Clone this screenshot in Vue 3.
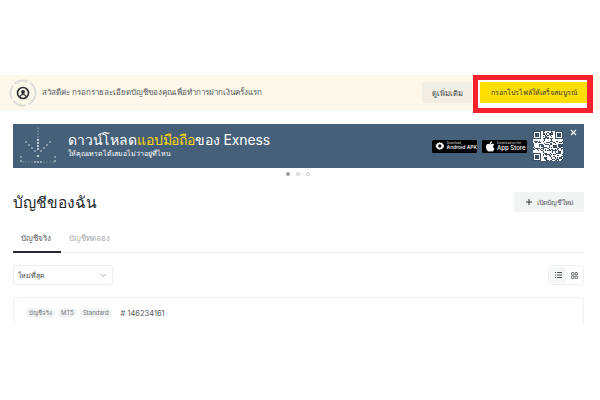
<template>
  <div class="page">
    <div class="notice">
      <div class="avatar">
        <svg width="28" height="28" viewBox="0 0 28 28" fill="none">
          <circle cx="14" cy="14" r="12.5" stroke="#dcdcd8" stroke-width="2" stroke-dasharray="14 2.5" />
          <circle cx="14" cy="14" r="5.5" stroke="#2b2f33" stroke-width="1.6" />
          <circle cx="14" cy="13" r="2" fill="#2b2f33" />
          <path d="M10.8 17.6c.8-1.5 1.9-2.1 3.2-2.1s2.4.6 3.2 2.1" stroke="#2b2f33" stroke-width="1.2" />
        </svg>
      </div>
      <span class="notice-text">สวัสดีค่ะ กรอกรายละเอียดบัญชีของคุณเพื่อทำการฝากเงินครั้งแรก</span>
      <button class="more">ดูเพิ่มเติม</button>
      <div class="cta-wrap">
        <div class="highlight"></div>
        <button class="cta">กรอกโปรไฟล์ให้เสร็จสมบูรณ์</button>
      </div>
    </div>

    <div class="banner">
      <svg class="arrow" width="40" height="38" viewBox="0 0 40 38" fill="#fff">
        <circle v-for="(d, i) in dots" :key="i" :cx="d[0]" :cy="d[1]" :r="d[2]" />
      </svg>
      <div class="banner-text">
        <div class="banner-title">ดาวน์โหลด<span class="yellow">แอปมือถือ</span>ของ Exness</div>
        <div class="banner-sub">ให้คุณเทรดได้เสมอไม่ว่าอยู่ที่ไหน</div>
      </div>
      <div class="stores">
        <div class="store">
          <svg width="10" height="10" viewBox="0 0 10 10" fill="#fff">
            <path d="M5 .8l1 1.1 1.5-.3.4 1.5 1.5.5-.4 1.4.4 1.4-1.5.5-.4 1.5L6 8.1 5 9.2 4 8.1l-1.5.3-.4-1.5-1.5-.5.4-1.4-.4-1.4 1.5-.5.4-1.5L4 1.9z" />
            <circle cx="5" cy="5" r="1.7" fill="#000" />
          </svg>
          <div class="store-text"><small>Download</small><b>Android APK</b></div>
        </div>
        <div class="store">
          <svg width="10" height="11" viewBox="0 0 10 11" fill="#fff">
            <path d="M7 .3c.1.8-.2 1.4-.6 1.9-.5.5-1 .8-1.6.7-.1-.7.2-1.4.6-1.8C5.800.6 6.400.3 7 .3zM9.300 3.700c-.8.5-1.200 1.100-1.200 1.900 0 .9.500 1.600 1.400 2-.5 1.500-1.300 3-2.400 3-.6 0-.9-.4-1.600-.4s-1.100.4-1.600.4C2.500 10.600 1 7.900 1 5.800c0-2 1.200-3 2.500-3 .7 0 1.300.5 1.700.5s1.100-.5 1.900-.5c.9 0 1.700.4 2.200.9z" />
          </svg>
          <div class="store-text"><small>Download on the</small><b class="big">App Store</b></div>
        </div>
      </div>
      <svg class="qr" width="30" height="30" viewBox="0 0 25 25" shape-rendering="crispEdges">
        <rect width="25" height="25" fill="#fff" />
        <rect v-for="(c, i) in qrCells" :key="i" :x="c[0]" :y="c[1]" width="1" height="1" fill="#3b5064" />
      </svg>
      <svg class="close" width="7" height="7" viewBox="0 0 7 7" stroke="#fff" stroke-width="1.1">
        <path d="M1 1l5 5M6 1L1 6" />
      </svg>
    </div>

    <div class="pager">
      <i class="on"></i><i></i><i></i>
    </div>

    <div class="heading">
      <h1>บัญชีของฉัน</h1>
      <button class="open">
        <svg width="6" height="6" viewBox="0 0 6 6" stroke="#33373b" stroke-width="1"><path d="M3 0v6M0 3h6" /></svg>
        <span>เปิดบัญชีใหม่</span>
      </button>
    </div>

    <div class="tabs">
      <div class="tab active">บัญชีจริง</div>
      <div class="tab">บัญชีทดลอง</div>
    </div>

    <div class="tools">
      <div class="select">
        <span>ใหม่ที่สุด</span>
        <svg width="5" height="3" viewBox="0 0 5 3" fill="none" stroke="#8a8d90" stroke-width=".8"><path d="M.3.4l2.2 2 2.2-2" /></svg>
      </div>
      <div class="view">
        <div class="view-btn on">
          <svg width="7" height="6" viewBox="0 0 7 6" stroke="#44484c" stroke-width="1"><path d="M0 .5h1M2 .5h5M0 3h1M2 3h5M0 5.5h1M2 5.5h5" /></svg>
        </div>
        <div class="view-btn">
          <svg width="7" height="7" viewBox="0 0 7 7" fill="#fff" stroke="#5c6064" stroke-width="1">
            <rect x=".5" y=".5" width="2.5" height="2.5" rx=".8" />
            <rect x="4" y=".5" width="2.5" height="2.5" rx=".8" />
            <rect x=".5" y="4" width="2.5" height="2.5" rx=".8" />
            <rect x="4" y="4" width="2.5" height="2.5" rx=".8" />
          </svg>
        </div>
      </div>
    </div>

    <div class="card">
      <div class="tags">
        <span class="tag">บัญชีจริง</span>
        <span class="tag">MT5</span>
        <span class="tag">Standard</span>
        <span class="num"># 146234161</span>
      </div>
    </div>
  </div>
</template>

<script setup>
// arrow made of dots on the banner
const dots = []
for (let y = 1; y <= 24; y += 3) dots.push([20, y, y > 10 ? 0.9 : 0.5])
for (let i = 1; i <= 4; i++) {
  dots.push([20 - i * 3, 27 - i * 3, 0.7])
  dots.push([20 + i * 3, 27 - i * 3, 0.7])
}
dots.push([20, 29, 0.9])
for (let x = 5; x <= 35; x += 3) dots.push([x, 35, x > 14 && x < 26 ? 0.8 : 0.4])
dots.push([3, 30, 0.7], [37, 30, 0.7], [3, 34, 0.8], [37, 34, 0.8])

// fake qr pattern, only has to read as a qr code
const qrCells = []
const isFinder = (x, y) => (x < 8 && y < 8) || (x >= 17 && y < 8) || (x < 8 && y >= 17)
let seed = 146234161
const next = () => {
  seed = (seed * 1103515245 + 12345) % 2147483648
  return seed / 2147483648
}
for (let y = 0; y < 25; y++) {
  for (let x = 0; x < 25; x++) {
    if (!isFinder(x, y) && next() < 0.42) qrCells.push([x, y])
  }
}
for (const [ox, oy] of [[0, 0], [18, 0], [0, 18]]) {
  for (let y = 0; y < 7; y++) {
    for (let x = 0; x < 7; x++) {
      const ring = x === 0 || y === 0 || x === 6 || y === 6
      const core = x > 1 && x < 5 && y > 1 && y < 5
      if (ring || core) qrCells.push([ox + x, oy + y])
    }
  }
}
</script>

<style scoped>
.page {
  width: 600px;
  height: 400px;
  box-sizing: border-box;
  padding-top: 75px;
  overflow: hidden;
  background: #fff;
  color: #2b2f33;
  font-family: Inter, "Noto Sans", "DejaVu Sans", sans-serif;
}

.notice {
  height: 35px;
  background: #fdf8ea;
  display: flex;
  align-items: center;
  padding: 0 13px 0 9px;
  box-shadow: 0 1px 2px rgba(0, 0, 0, 0.04);
}
.avatar {
  width: 28px;
  height: 28px;
  margin-right: 5px;
}
.notice-text {
  flex: 1;
  font-size: 8px;
  color: #55595d;
}
.more {
  width: 50px;
  height: 21px;
  margin-right: 8px;
  border: 0;
  border-radius: 2px;
  background: #f1eee4;
  font: inherit;
  font-size: 7.5px;
  color: #3a3e42;
  padding: 0;
}
.cta-wrap {
  position: relative;
  width: 107px;
}
.cta {
  display: block;
  position: relative;
  width: 107px;
  height: 21px;
  border: 0;
  border-radius: 1px;
  background: #ffde02;
  font: inherit;
  font-size: 7px;
  color: #33373b;
  padding: 0;
}
/* red marker drawn over the screenshot, white inside */
.highlight {
  position: absolute;
  left: -7px;
  top: -7px;
  width: 120px;
  height: 38px;
  box-sizing: border-box;
  background: #fff;
  border: 5px solid #f5222d;
  border-right-width: 6px;
}

.banner {
  margin: 14px 16px 0 13px;
  height: 44px;
  background: #456078;
  display: flex;
  align-items: center;
  position: relative;
  color: #fff;
}
.arrow {
  margin-left: 5px;
  margin-right: 10px;
}
.banner-text {
  flex: 1;
  padding-bottom: 3px;
}
.banner-title {
  font-size: 14px;
  line-height: 19px;
  font-weight: 400;
  letter-spacing: -0.13px;
}
.yellow {
  color: #ffd60a;
}
.banner-sub {
  font-size: 7px;
  line-height: 10px;
}
.stores {
  display: flex;
  gap: 5px;
  margin-right: 6px;
}
.store {
  width: 45px;
  height: 13px;
  background: #000;
  border-radius: 1.5px;
  display: flex;
  align-items: center;
  gap: 2px;
  padding-left: 3px;
  box-sizing: border-box;
}
.store-text {
  display: flex;
  flex-direction: column;
  line-height: 1;
  white-space: nowrap;
}
.store-text small {
  font-size: 3px;
  color: #ddd;
}
.store-text b {
  font-size: 5px;
  font-weight: 500;
}
.store-text b.big {
  font-size: 6px;
}
.qr {
  margin-right: 21px;
}
.close {
  position: absolute;
  right: 7px;
  top: 5px;
}

.pager {
  display: flex;
  justify-content: center;
  gap: 6px;
  margin-top: 4px;
  height: 7px;
  padding-right: 4px;
}
.pager i {
  width: 2px;
  height: 2px;
  border-radius: 50%;
  border: 1px solid #c9cbcd;
  background: #fff;
}
.pager i.on {
  background: #9a9ea2;
  border-color: #9a9ea2;
}

.heading {
  display: flex;
  justify-content: space-between;
  align-items: center;
  margin: 13px 16px 0 13px;
  height: 20px;
}
h1 {
  margin: 0;
  font-size: 15.5px;
  font-weight: 400;
  color: #25292d;
}
.open {
  width: 70px;
  height: 20px;
  border: 0;
  border-radius: 2px;
  background: #f2f3f3;
  font: inherit;
  font-size: 6.8px;
  color: #55595d;
  display: flex;
  align-items: center;
  justify-content: center;
  gap: 5px;
  padding: 0;
}

.tabs {
  display: flex;
  margin: 17px 16px 0 13px;
  height: 23px;
  border-bottom: 1px solid #eceded;
}
.tab {
  padding: 0 8px;
  font-size: 8px;
  line-height: 19px;
  color: #a8abae;
}
.tab.active {
  width: 48px;
  box-sizing: border-box;
  color: #55595d;
  border-bottom: 2px solid #25292d;
  height: 24px;
}

.tools {
  display: flex;
  justify-content: space-between;
  align-items: center;
  margin: 12px 16px 0 13px;
}
.select {
  width: 100px;
  height: 20px;
  box-sizing: border-box;
  border: 1px solid #eeeff0;
  border-radius: 2px;
  display: flex;
  align-items: center;
  justify-content: space-between;
  padding: 0 6px 0 4px;
  font-size: 7px;
  color: #44484c;
}
.view {
  width: 36px;
  height: 20px;
  box-sizing: border-box;
  border: 1px solid #eeeff0;
  border-radius: 4px;
  display: flex;
  padding: 1px;
}
.view-btn {
  flex: 1;
  display: flex;
  align-items: center;
  justify-content: center;
}
.view-btn.on {
  background: #f5f6f6;
  border-radius: 2px;
}

.card {
  margin: 12px 16px 0 13px;
  height: 28px;
  box-sizing: border-box;
  border: 1px solid #f0f1f1;
  border-bottom: 0;
  border-radius: 4px 4px 0 0;
  padding: 10px 12px 0;
}
.tags {
  display: flex;
  align-items: center;
  gap: 3px;
  height: 10px;
}
.tag {
  font-size: 6px;
  line-height: 10px;
  padding: 0 3px;
  border-radius: 5px;
  background: #f3f4f4;
  color: #6c7074;
}
.num {
  font-size: 7.5px;
  color: #55595d;
  margin-left: 6px;
}
</style>

<style>
html,
body {
  margin: 0;
  background: #fff;
}
</style>
